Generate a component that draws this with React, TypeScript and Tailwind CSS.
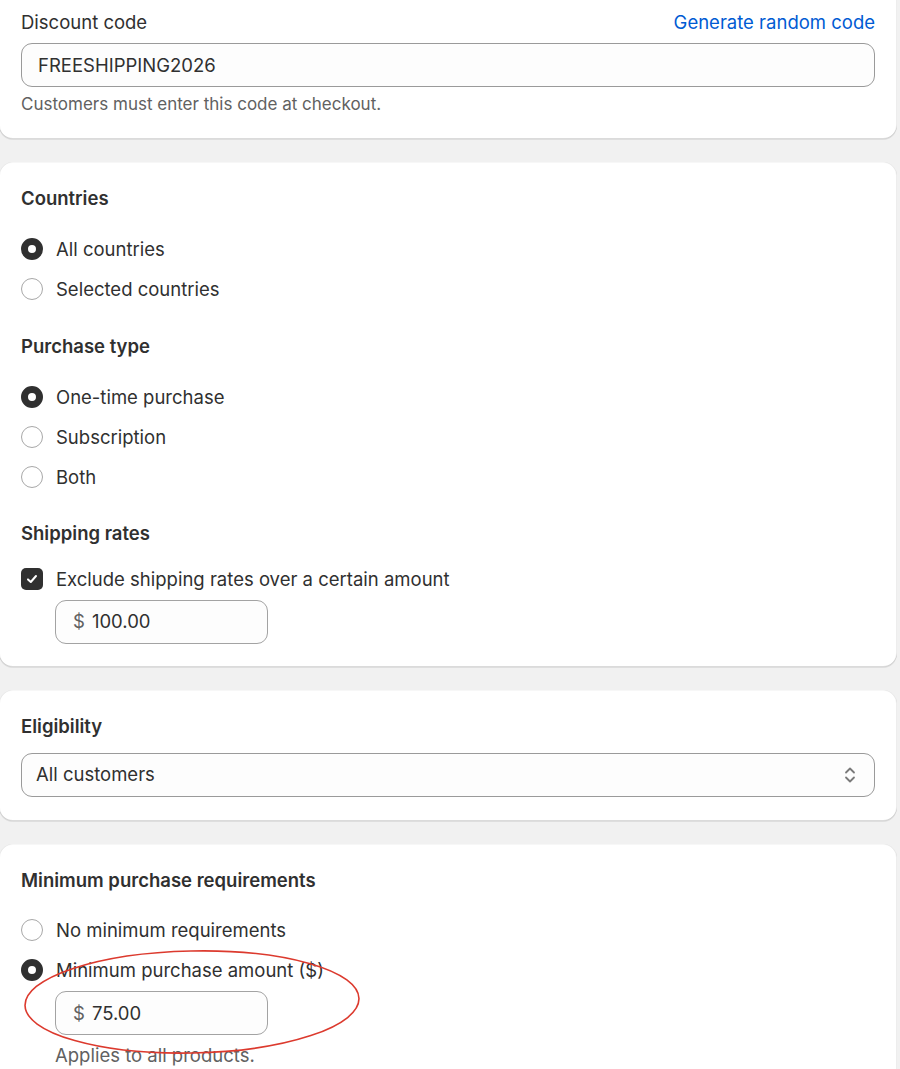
import React from "react";

function Card({ children, className = "" }: { children: React.ReactNode; className?: string }) {
  return (
    <div
      className={`bg-white rounded-[14px] px-[22px] shadow-[0_1px_0_0_rgba(0,0,0,0.08),inset_0_-1px_0_0_rgba(0,0,0,0.14),inset_0_1px_0_0_rgba(0,0,0,0.03),inset_1px_0_0_0_rgba(0,0,0,0.07),inset_-1px_0_0_0_rgba(0,0,0,0.07)] ${className}`}
    >
      {children}
    </div>
  );
}

function Radio({ checked, label }: { checked?: boolean; label: string }) {
  return (
    <div className="flex items-center h-[27px] gap-[13px]">
      {checked ? (
        <span className="w-[22px] h-[22px] rounded-full border-[7px] border-[#303030] bg-white shrink-0 box-border" />
      ) : (
        <span className="w-[22px] h-[22px] rounded-full border border-[#a8a8a8] bg-white shrink-0 box-border" />
      )}
      <span className="text-[#303030] pt-px">{label}</span>
    </div>
  );
}

function Heading({ children }: { children: React.ReactNode }) {
  return <div className="h-[27px] leading-[27px] pt-px font-semibold text-[#303030]">{children}</div>;
}

function MoneyInput({ value }: { value: string }) {
  return (
    <div className="ml-[34px] w-[213px] h-[44px] rounded-[11px] border border-[#a3a3a3] bg-[#fdfdfd] flex items-center pl-[17px] gap-[7px]">
      <span className="text-[#616161]">$</span>
      <span className="text-[#303030]">{value}</span>
    </div>
  );
}

export default function App() {
  return (
    <div className="relative w-full h-[1069px] overflow-hidden bg-[#f1f1f1] font-['Inter','Noto_Sans',sans-serif] text-[18.5px] leading-[27px] text-[#303030]">
      <div className="flex flex-col gap-[23px] ml-[-1px] mr-[3px] mt-[-14px]">
        {/* Discount code */}
        <Card className="pt-[22px] pb-[22px]">
          <div className="flex items-center justify-between h-[27px] pt-[2px]">
            <span className="text-[#303030]">Discount code</span>
            <span className="text-[#005bd3]">Generate random code</span>
          </div>
          <div className="mt-[8px] h-[44px] rounded-[11px] border border-[#9a9a9a] bg-[#fdfdfd] flex items-center pl-[16px]">
            FREESHIPPING2026
          </div>
          <div className="mt-[4px] text-[17px] leading-[26px] text-[#616161]">Customers must enter this code at checkout.</div>
        </Card>

        {/* Countries / purchase / shipping */}
        <Card className="pt-[22px] pb-[23px]">
          <Heading>Countries</Heading>
          <div className="mt-[24px] flex flex-col gap-[13px]">
            <Radio checked label="All countries" />
            <Radio label="Selected countries" />
          </div>
          <div className="mt-[30px]">
            <Heading>Purchase type</Heading>
          </div>
          <div className="mt-[24px] flex flex-col gap-[13px]">
            <Radio checked label="One-time purchase" />
            <Radio label="Subscription" />
            <Radio label="Both" />
          </div>
          <div className="mt-[29px]">
            <Heading>Shipping rates</Heading>
          </div>
          <div className="mt-[19px] flex items-center h-[27px] gap-[13px]">
            <span className="w-[22px] h-[22px] rounded-[5px] bg-[#303030] flex items-center justify-center shrink-0">
              <svg width="14" height="14" viewBox="0 0 14 14" fill="none">
                <path d="M3 7.4 L5.8 10 L11 4" stroke="white" strokeWidth="2" strokeLinecap="round" strokeLinejoin="round" />
              </svg>
            </span>
            <span className="pt-px">Exclude shipping rates over a certain amount</span>
          </div>
          <div className="mt-[7.5px]">
            <MoneyInput value="100.00" />
          </div>
        </Card>

        {/* Eligibility */}
        <Card className="pt-[22px] pb-[24px]">
          <Heading>Eligibility</Heading>
          <div className="mt-[14px] h-[44px] rounded-[11px] border border-[#9a9a9a] bg-[#fdfdfd] flex items-center justify-between pl-[14px] pr-[17px]">
            <span>All customers</span>
            <svg width="14" height="20" viewBox="0 0 14 20" fill="none">
              <path d="M3 7.5 L7 3.5 L11 7.5" stroke="#7a7a7a" strokeWidth="1.8" strokeLinecap="round" strokeLinejoin="round" />
              <path d="M3 12.5 L7 16.5 L11 12.5" stroke="#7a7a7a" strokeWidth="1.8" strokeLinecap="round" strokeLinejoin="round" />
            </svg>
          </div>
        </Card>

        {/* Minimum purchase requirements */}
        <Card className="pt-[22px] pb-[40px]">
          <Heading>Minimum purchase requirements</Heading>
          <div className="mt-[24px] flex flex-col gap-[13px]">
            <Radio label="No minimum requirements" />
            <Radio checked label="Minimum purchase amount ($)" />
          </div>
          <div className="mt-[7.5px]">
            <MoneyInput value="75.00" />
          </div>
          <div className="mt-[6.5px] pl-[34px] text-[#616161]">Applies to all products.</div>
        </Card>
      </div>

      {/* red annotation ellipse */}
      <svg
        className="absolute left-0 top-0 pointer-events-none"
        width="900"
        height="1069"
        viewBox="0 0 900 1069"
      >
        <ellipse
          cx="192"
          cy="1002"
          rx="167"
          ry="51"
          transform="rotate(-1.2 192 1002)"
          fill="none"
          stroke="#dc3a2e"
          strokeWidth="1.6"
        />
      </svg>
    </div>
  );
}
